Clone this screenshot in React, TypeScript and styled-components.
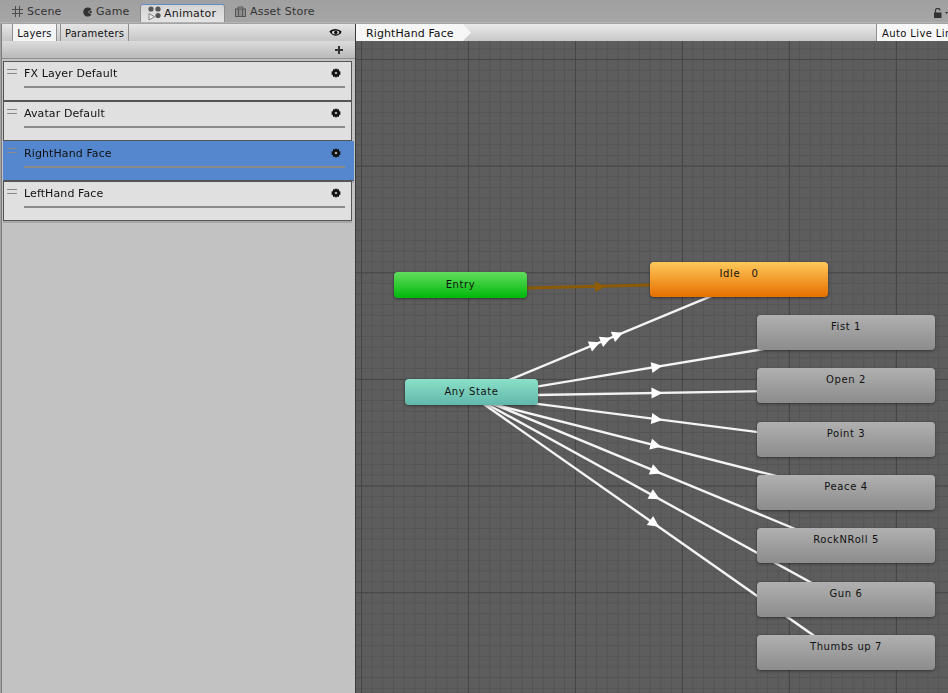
import React from "react";
import styled, { createGlobalStyle } from "styled-components";

const Global = createGlobalStyle`
  html, body { margin: 0; padding: 0; background: #a2a2a2; }
  * { box-sizing: border-box; }
`;

const Window = styled.div`
  width: 948px;
  height: 693px;
  overflow: hidden;
  display: flex;
  flex-direction: column;
  font-family: "DejaVu Sans", sans-serif;
  font-size: 11px;
  color: #111;
  background: #a2a2a2;
`;

const TabBar = styled.div`
  height: 23px;
  flex: none;
  display: flex;
  align-items: flex-end;
  background: linear-gradient(#a0a0a0, #a6a6a6);
  padding: 0 0 2px 4px;
  position: relative;
  border-bottom: 1px solid #b4b4b4;
`;

const Tab = styled.div<{ $active?: boolean; $w: number; $pad: number }>`
  width: ${(p) => p.$w}px;
  height: 18px;
  padding-left: ${(p) => p.$pad}px;
  display: flex;
  align-items: center;
  gap: ${(p) => (p.$active ? 3 : 4)}px;
  color: ${(p) => (p.$active ? "#1a1a1a" : "#333")};
  letter-spacing: 0.2px;
  border-radius: 3px 3px 0 0;
  margin-bottom: ${(p) => (p.$active ? -2 : 0)}px;
  background: ${(p) => (p.$active ? "linear-gradient(#d4d4d4, #e4e4e4)" : "transparent")};
  border-top: ${(p) => (p.$active ? "1px solid #5a8fd0" : "1px solid transparent")};
  border-left: ${(p) => (p.$active ? "1px solid #8c8c8c" : "none")};
  border-right: ${(p) => (p.$active ? "1px solid #8c8c8c" : "none")};
  flex: none;
`;

const LockArea = styled.div`
  position: absolute;
  right: 0;
  top: 8px;
  display: flex;
  align-items: center;
  gap: 3px;
`;

const Body = styled.div`
  flex: 1;
  display: flex;
  min-height: 0;
  padding-top: 1px;
`;

const LeftPanel = styled.div`
  width: 355px;
  flex: none;
  margin-left: 1px;
  border-left: 1px solid #7d7d7d;
  border-right: 1px solid #3c3c3c;
  background: #c2c2c2;
  display: flex;
  flex-direction: column;
`;

const ToolRow = styled.div`
  height: 17px;
  flex: none;
  display: flex;
  align-items: stretch;
  padding-left: 10px;
  background: linear-gradient(#e6e6e6, #c6c6c6);
`;

const SideTab = styled.div<{ $active?: boolean; $w: number }>`
  width: ${(p) => p.$w}px;
  margin-right: 3px;
  padding-top: 1px;
  display: flex;
  align-items: center;
  justify-content: center;
  font-size: 10px;
  letter-spacing: 0.2px;
  border-left: 1px solid #8f8f8f;
  border-right: 1px solid #8f8f8f;
  background: ${(p) => (p.$active ? "#f4f4f4" : "linear-gradient(#e4e4e4, #cfcfcf)")};
`;

const EyeSlot = styled.div`
  margin-left: auto;
  width: 26px;
  display: flex;
  align-items: center;
`;

const AddRow = styled.div`
  height: 18px;
  flex: none;
  display: flex;
  align-items: center;
  justify-content: flex-end;
  padding-right: 12px;
  background: linear-gradient(#dcdcdc, #b9b9b9);
  border-bottom: 1px solid #8e8e8e;
`;

const LayerList = styled.div`
  padding: 2px 0 0 1px;
  display: flex;
  flex-direction: column;
  width: 350px;
  filter: drop-shadow(0 2px 0 #a8a8a8);
`;

const LayerCard = styled.div<{ $selected?: boolean }>`
  height: 40px;
  flex: none;
  position: relative;
  padding: ${(p) => (p.$selected ? "5px 8px 0 20px" : "4px 6px 0 20px")};
  border: 1px solid #555;
  border-top-width: ${(p) => (p.$selected ? 0 : 1)}px;
  background: ${(p) => (p.$selected ? "#5487cd" : "#e0e0e0")};
  width: ${(p) => (p.$selected ? 351 : 349)}px;
  border-left-color: ${(p) => (p.$selected ? "#5487cd" : "#555")};
  border-right-color: ${(p) => (p.$selected ? "#5487cd" : "#555")};
`;

const Grip = styled.div`
  position: absolute;
  left: 3px;
  top: 7px;
  width: 10px;
  height: 5px;
  border-top: 1px solid #8a8a8a;
  border-bottom: 1px solid #8a8a8a;
`;

const LayerHead = styled.div`
  display: flex;
  justify-content: space-between;
  align-items: center;
  height: 14px;
  letter-spacing: 0.1px;
  padding-right: 4px;
`;

const SliderBar = styled.div`
  height: 2px;
  margin-top: 6px;
  background: #8a8a8a;
`;

const RightPanel = styled.div`
  flex: 1;
  display: flex;
  flex-direction: column;
  min-width: 0;
`;

const CrumbBar = styled.div`
  height: 17px;
  flex: none;
  display: flex;
  justify-content: space-between;
  background: linear-gradient(#eaeaea, #c8c8c8);
`;

const Crumb = styled.div`
  width: 115px;
  padding: 1px 0 0 10px;
  display: flex;
  align-items: center;
  letter-spacing: 0.1px;
  background: #f6f6f6;
  clip-path: polygon(0 0, 107px 0, 115px 50%, 107px 100%, 0 100%);
`;

const LiveLink = styled.div`
  width: 72px;
  padding: 1px 0 0 5px;
  display: flex;
  align-items: center;
  font-size: 10px;
  letter-spacing: 0.38px;
  white-space: nowrap;
  overflow: hidden;
  background: #f8f8f8;
  border-left: 1px solid #8f8f8f;
`;

const Canvas = styled.div`
  flex: 1;
  position: relative;
  overflow: hidden;
  background-color: #5d5d5d;
  background-image:
    linear-gradient(to right, #464646 1px, transparent 1px),
    linear-gradient(to bottom, #464646 1px, transparent 1px),
    linear-gradient(to right, #545454 1px, transparent 1px),
    linear-gradient(to bottom, #545454 1px, transparent 1px);
  background-size: 107px 100%, 100% 106.67px, 10.7px 100%, 100% 10.67px;
  background-position: 5px 0, 0 18px, 5px 0, 0 18px;
`;

const Edges = styled.svg`
  position: absolute;
  left: 0;
  top: 0;
`;

const tones = {
  entry: "linear-gradient(#62dc5e, #00b80a)",
  idle: "linear-gradient(#fec95a, #e66f00)",
  any: "linear-gradient(#8be0c8, #62b8aa)",
  state: "linear-gradient(#b0b0b0, #8c8c8c)",
};

const StateNode = styled.div<{ $tone: keyof typeof tones; $x: number; $y: number; $w: number; $h: number; $center?: boolean }>`
  position: absolute;
  left: ${(p) => p.$x}px;
  top: ${(p) => p.$y}px;
  width: ${(p) => p.$w}px;
  height: ${(p) => p.$h}px;
  border-radius: 4px;
  background: ${(p) => tones[p.$tone]};
  box-shadow: 0 1px 3px rgba(0, 0, 0, 0.45);
  font-size: 10px;
  letter-spacing: 0.6px;
  line-height: 14px;
  text-align: center;
  white-space: pre;
  padding-top: ${(p) => (p.$center ? 6 : 5)}px;
  color: #111;
`;

const nodes = [
  { label: "Entry", tone: "entry", x: 38, y: 231, w: 133, h: 26, center: true },
  { label: "Idle   0", tone: "idle", x: 294, y: 221, w: 178, h: 35 },
  { label: "Any State", tone: "any", x: 49, y: 338, w: 133, h: 26, center: true },
  { label: "Fist 1", tone: "state", x: 401, y: 274, w: 178, h: 35 },
  { label: "Open 2", tone: "state", x: 401, y: 327, w: 178, h: 35 },
  { label: "Point 3", tone: "state", x: 401, y: 381, w: 178, h: 35 },
  { label: "Peace 4", tone: "state", x: 401, y: 434, w: 178, h: 35 },
  { label: "RockNRoll 5", tone: "state", x: 401, y: 487, w: 178, h: 35 },
  { label: "Gun 6", tone: "state", x: 401, y: 541, w: 178, h: 35 },
  { label: "Thumbs up 7", tone: "state", x: 401, y: 594, w: 178, h: 35 },
] as const;

// Page coordinates of the canvas origin are (356, 41).
const OX = 356;
const OY = 41;
const transitions: { a: [number, number]; b: [number, number]; arrows: [number, number][] }[] = [
  { a: [480, 392.2], b: [740, 284.2], arrows: [[595, 344.4], [606, 339.8], [618, 334.8]] },
  { a: [480, 396], b: [800, 343], arrows: [[657, 366.7]] },
  { a: [480, 396], b: [800, 390.5], arrows: [[657, 393]] },
  { a: [480, 396.5], b: [800, 437.5], arrows: [[657, 419.2]] },
  { a: [480, 401], b: [800, 482], arrows: [[656, 445.5]] },
  { a: [480, 398.5], b: [800, 531], arrows: [[656, 471.4]] },
  { a: [480, 400.3], b: [850, 604], arrows: [[655, 496.6]] },
  { a: [480, 401.5], b: [850, 661], arrows: [[654.5, 523.7]] },
];

function arrowPoints(x: number, y: number, dx: number, dy: number, len = 11, half = 5.5) {
  const n = Math.hypot(dx, dy);
  const ux = dx / n;
  const uy = dy / n;
  const bx = x - ux * (len / 2);
  const by = y - uy * (len / 2);
  const tx = x + ux * (len / 2);
  const ty = y + uy * (len / 2);
  return `${tx},${ty} ${bx - uy * half},${by + ux * half} ${bx + uy * half},${by - ux * half}`;
}

const GridIcon = () => (
  <svg width="11" height="11" viewBox="0 0 11 11" stroke="#4d4d4d" strokeWidth="1" fill="none">
    <path d="M3.5 0v11M7.5 0v11M0 3.5h11M0 7.5h11" />
  </svg>
);

const GameIcon = () => (
  <svg width="10" height="10" viewBox="0 0 10 10" fill="#333">
    <path d="M9.5 2.2A4.6 4.6 0 1 0 9.5 7.8L5.8 5z" />
    <circle cx="8.6" cy="5" r="1.2" />
  </svg>
);

const AnimatorIcon = () => (
  <svg width="13" height="15" viewBox="0 0 13 15">
    <circle cx="3" cy="3" r="2.6" fill="#555" />
    <circle cx="10" cy="3" r="2.6" fill="#555" />
    <circle cx="10" cy="9.5" r="2.6" fill="#555" />
    <path d="M1 7.5v6.5l5.5-3.2z" fill="#f0f0f0" stroke="#666" strokeWidth="0.8" />
  </svg>
);

const StoreIcon = () => (
  <svg width="11" height="11" viewBox="0 0 11 11">
    <path d="M3 3V1h5V3" fill="none" stroke="#555" />
    <rect x="0.5" y="3" width="10" height="7.5" fill="#8c8c8c" stroke="#555" />
    <path d="M3.5 3v7.5M7.5 3v7.5" stroke="#555" />
  </svg>
);

const LockIcon = () => (
  <svg width="8" height="10" viewBox="0 0 8 10">
    <path d="M1.5 5V2.5a2.2 2.2 0 0 1 4.4 0" fill="none" stroke="#333" strokeWidth="1.2" />
    <rect x="0" y="4.5" width="7.5" height="5.5" fill="#333" />
  </svg>
);

const Caret = () => (
  <svg width="3" height="4" viewBox="0 0 3 4">
    <path d="M0 1h3L1.5 3z" fill="#333" />
  </svg>
);

const EyeIcon = () => (
  <svg width="13" height="10" viewBox="0 0 13 10">
    <path d="M0.3 3.5C3 0.3 9 0 12.7 3.8 10.5 8.6 4 9.4 0.3 3.5z" fill="#111" />
    <ellipse cx="6.6" cy="4.4" rx="3.6" ry="1.9" fill="#d8d8d8" />
    <circle cx="6.8" cy="4.4" r="1.7" fill="#111" />
  </svg>
);

const PlusIcon = () => (
  <svg width="8" height="8" viewBox="0 0 8 8">
    <path d="M4 0v8M0 4h8" stroke="#333" strokeWidth="2" />
  </svg>
);

const GearIcon = () => (
  <svg width="10" height="10" viewBox="0 0 9 9">
    <path d="M4.5 0 5.4 1.4 7.1 1 7.2 2.8 9 3.6 7.9 4.5 9 5.6 7.3 6.2 7.1 8 5.4 7.6 4.5 9 3.6 7.6 1.9 8 1.7 6.2 0 5.6 1.1 4.5 0 3.6 1.8 2.8 1.9 1 3.6 1.4z" fill="#111" />
    <circle cx="4.5" cy="4.5" r="1.2" fill="#aaa" />
  </svg>
);

const layers = ["FX Layer Default", "Avatar Default", "RightHand Face", "LeftHand Face"];

export default function App() {
  return (
    <Window>
      <Global />
      <TabBar>
        <Tab $w={72} $pad={8}><GridIcon />Scene</Tab>
        <Tab $w={64} $pad={6}><GameIcon />Game</Tab>
        <Tab $active $w={85} $pad={7}><AnimatorIcon />Animator</Tab>
        <Tab $w={100} $pad={10}><StoreIcon />Asset Store</Tab>
        <LockArea><LockIcon /><Caret /></LockArea>
      </TabBar>
      <Body>
        <LeftPanel>
          <ToolRow>
            <SideTab $active $w={45}>Layers</SideTab>
            <SideTab $w={69}>Parameters</SideTab>
            <EyeSlot><EyeIcon /></EyeSlot>
          </ToolRow>
          <AddRow><PlusIcon /></AddRow>
          <LayerList>
            {layers.map((name) => (
              <LayerCard key={name} $selected={name === "RightHand Face"}>
                <Grip />
                <LayerHead>
                  <span>{name}</span>
                  <GearIcon />
                </LayerHead>
                <SliderBar />
              </LayerCard>
            ))}
          </LayerList>
        </LeftPanel>
        <RightPanel>
          <CrumbBar>
            <Crumb>RightHand Face</Crumb>
            <LiveLink>Auto Live Link</LiveLink>
          </CrumbBar>
          <Canvas>
            <Edges width="592" height="652" viewBox={`${OX} ${OY} 592 652`}>
              <line x1="527" y1="288" x2="650" y2="285" stroke="#8a5a06" strokeWidth="3" />
              <polygon points="605,286.7 595,281.5 595,292" fill="#8f5c04" />
              {transitions.map((t, i) => (
                <g key={i}>
                  <line x1={t.a[0]} y1={t.a[1]} x2={t.b[0]} y2={t.b[1]} stroke="#f4f4f4" strokeWidth="2.4" />
                  {t.arrows.map((p, j) => (
                    <polygon key={j} points={arrowPoints(p[0], p[1], t.b[0] - t.a[0], t.b[1] - t.a[1])} fill="#fff" />
                  ))}
                </g>
              ))}
            </Edges>
            {nodes.map((n) => (
              <StateNode
                key={n.label}
                $tone={n.tone}
                $x={n.x}
                $y={n.y}
                $w={n.w}
                $h={n.h}
                $center={"center" in n}
              >
                {n.label}
              </StateNode>
            ))}
          </Canvas>
        </RightPanel>
      </Body>
    </Window>
  );
}
